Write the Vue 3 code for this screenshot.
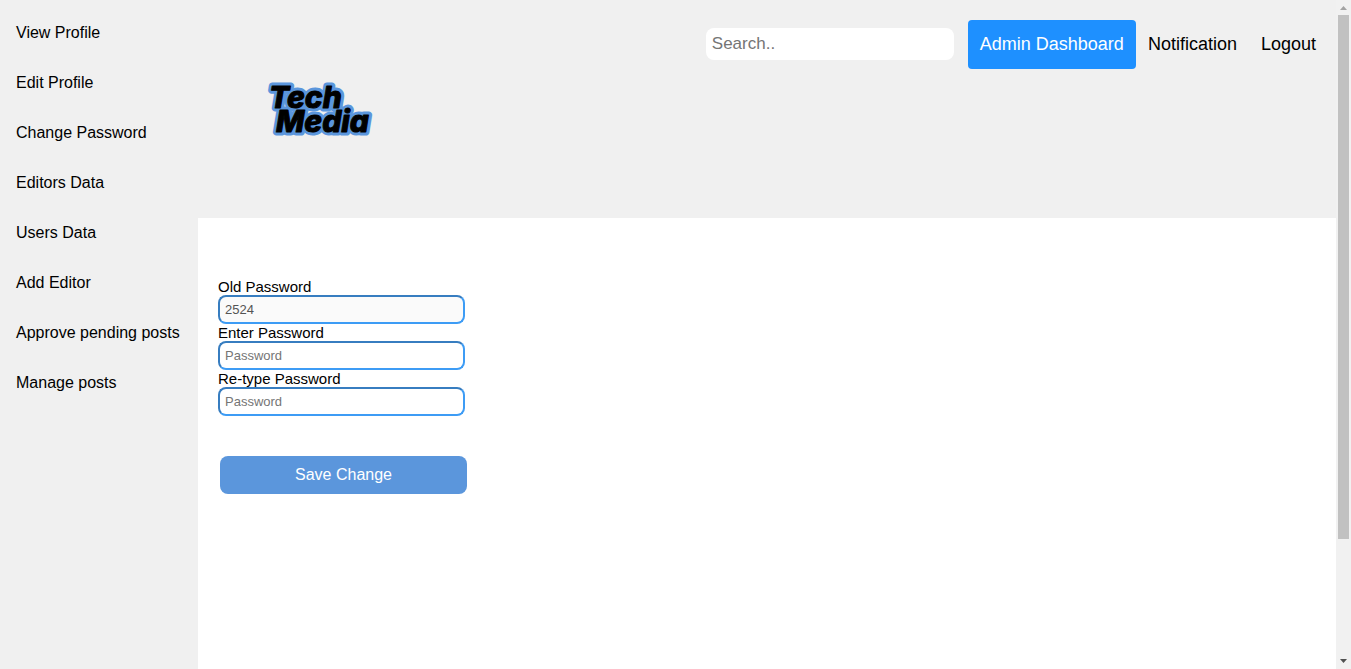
<script setup>
import { ref } from 'vue'

const links = [
  'View Profile',
  'Edit Profile',
  'Change Password',
  'Editors Data',
  'Users Data',
  'Add Editor',
  'Approve pending posts',
  'Manage posts',
]
const search = ref('')
const oldPassword = ref('2524')
const newPassword = ref('')
const repeatPassword = ref('')
</script>

<template>
  <div class="page">
    <nav class="sidebar" aria-label="Account">
      <a v-for="link in links" :key="link" href="#">{{ link }}</a>
    </nav>

    <div class="content">
      <header class="header">
        <nav class="topnav" aria-label="Main">
          <input v-model="search" class="search" type="text" placeholder="Search.." aria-label="Search" />
          <a class="active" href="#">Admin Dashboard</a>
          <a href="#">Notification</a>
          <a href="#">Logout</a>
        </nav>
        <a class="logo" href="#" aria-label="Tech Media">
          <svg width="120" height="64" viewBox="0 0 120 64">
            <use class="outline" href="#logo-words" />
            <g class="letters">
              <g id="logo-words">
                <text x="9" y="31">Tech</text>
                <text x="16" y="55">Media</text>
              </g>
            </g>
          </svg>
        </a>
      </header>

      <main class="main">
        <form class="form" @submit.prevent>
          <label for="old">Old Password</label>
          <input id="old" v-model="oldPassword" type="text" disabled />
          <label for="new">Enter Password</label>
          <input id="new" v-model="newPassword" type="password" placeholder="Password" />
          <label for="repeat">Re-type Password</label>
          <input id="repeat" v-model="repeatPassword" type="password" placeholder="Password" />
          <button type="submit">Save Change</button>
        </form>
      </main>
    </div>

    <div class="scrollbar" aria-hidden="true">
      <svg width="15" height="15" viewBox="0 0 15 15"><path d="M4 10h7L7.500 6z" fill="#a3a3a3" /></svg>
      <div class="track"><div class="thumb"></div></div>
      <svg width="15" height="15" viewBox="0 0 15 15"><path d="M4 5h7L7.500 9z" fill="#505050" /></svg>
    </div>
  </div>
</template>

<style>
body {
  margin: 0;
  background: #fff;
}
</style>

<style scoped>
.page {
  display: flex;
  height: 100vh;
  overflow: hidden;
  font-family: "Liberation Sans", Arial, sans-serif;
  color: #000;
}
.page * {
  box-sizing: border-box;
}
a {
  color: inherit;
  text-decoration: none;
}
.sidebar {
  flex: none;
  width: 198px;
  padding-top: 8px;
  background: #f0f0f0;
  font-size: 16px;
  line-height: 18px;
}
.sidebar a {
  display: block;
  padding: 16px;
  white-space: nowrap;
}
.content {
  flex: 1;
  min-width: 0;
}
.header {
  height: 218px;
  padding: 20px 8px 0 62px;
  background: #f0f0f0;
}
.topnav {
  display: flex;
  justify-content: flex-end;
  align-items: flex-start;
  font-size: 18px;
  line-height: 25px;
}
.topnav a {
  padding: 12px;
  border-radius: 4px;
}
.topnav .active {
  background: #1e90ff;
  color: #fff;
}
.search {
  width: 248px;
  height: 32px;
  margin: 8px 14px 0 0;
  padding: 6px;
  border: none;
  border-radius: 8px;
  background: #fff;
  font: 17px "Liberation Sans", Arial, sans-serif;
}
input::placeholder {
  color: #757575;
}
.logo {
  display: block;
  width: 120px;
  margin-top: 8px;
}
.logo svg {
  display: block;
}
.logo text {
  font: italic 800 30px Inter, sans-serif;
}
.outline {
  fill: #5b96dc;
  stroke: #5b96dc;
  stroke-width: 7px;
  stroke-linejoin: round;
}
.letters {
  fill: #000;
  stroke: #000;
  stroke-width: 1px;
  stroke-linejoin: round;
}
.letters .outline {
  stroke-width: 7px;
}
.main {
  padding: 60px 20px;
  background: #fff;
}
.form {
  display: flex;
  flex-direction: column;
  align-items: flex-start;
}
.form label {
  font-size: 15px;
  line-height: 17px;
}
.form input {
  width: 247px;
  height: 29px;
  padding: 5px;
  border: 2px solid;
  border-color: #377dc0 #3d9cf5 #3d9cf5 #377dc0;
  border-radius: 8px;
  background: #fff;
  font: 13px "Liberation Sans", Arial, sans-serif;
}
.form input:disabled {
  background: #fafafa;
  color: #545454;
}
.form button {
  width: 247px;
  height: 38px;
  margin: 40px 2px 0;
  border: none;
  border-radius: 8px;
  background: #5b96dc;
  color: #fff;
  font: 16px "Liberation Sans", Arial, sans-serif;
}
.scrollbar {
  flex: none;
  display: flex;
  flex-direction: column;
  width: 15px;
  background: #f1f1f1;
}
.track {
  flex: 1;
  padding: 0 2px;
}
.thumb {
  height: 82%;
  background: #c1c1c1;
}
</style>
